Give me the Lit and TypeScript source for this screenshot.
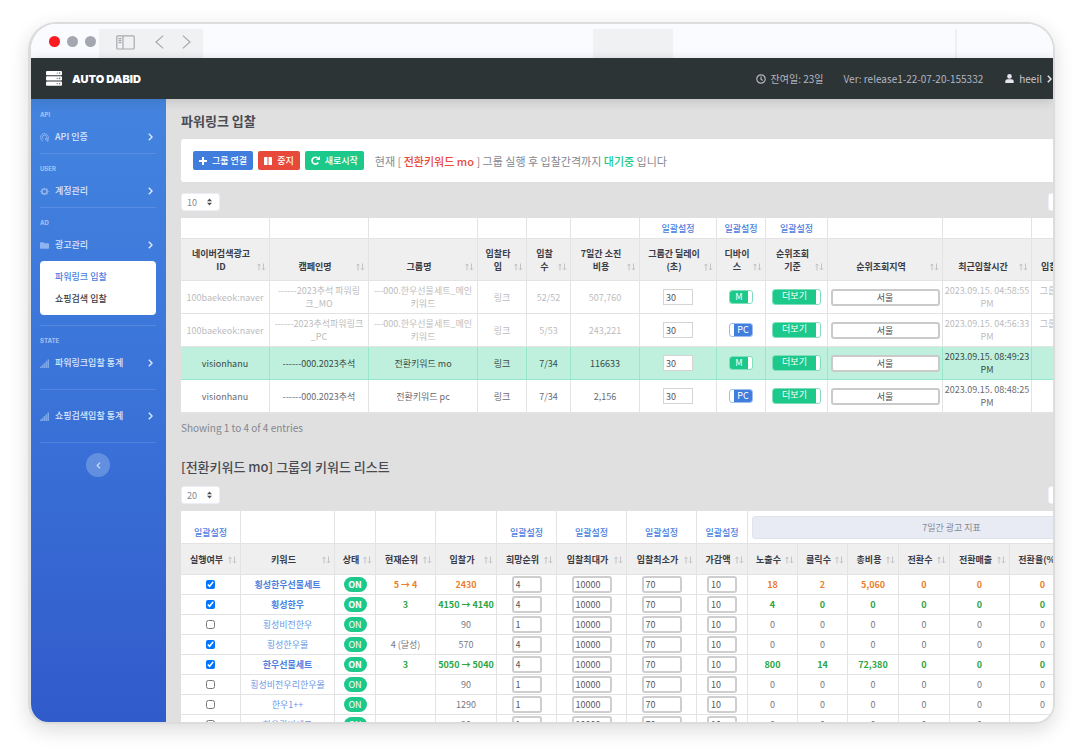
import { LitElement, html, css, svg, nothing } from "lit";
import { customElement, property } from "lit/decorators.js";
import { classMap } from "lit/directives/class-map.js";

interface Column {
  label: string;
  width: number;
  bulk?: boolean;
}

interface GroupRow {
  id: string;
  campaign: string;
  group: string;
  count: string;
  cost: string;
  mobile: boolean;
  time: string;
  state: string;
  tone: "muted" | "active" | "plain";
}

interface KeywordRow {
  on: boolean;
  keyword: string;
  rank: string;
  bid: string;
  target: string;
  stats: string[];
  tone: "up" | "down" | "none";
}

const GROUP_COLUMNS: Column[] = [
  { label: "네이버검색광고\nID", width: 89 },
  { label: "캠페인명", width: 99 },
  { label: "그룹명", width: 109 },
  { label: "입찰타\n입", width: 49 },
  { label: "입찰\n수", width: 44 },
  { label: "7일간 소진\n비용", width: 69 },
  { label: "그룹간 딜레이\n(초)", width: 77, bulk: true },
  { label: "디바이\n스", width: 49, bulk: true },
  { label: "순위조회\n기준", width: 62, bulk: true },
  { label: "순위조회지역", width: 115 },
  { label: "최근입찰시간", width: 89 },
  { label: "입찰상태", width: 60 },
];

const GROUP_ROWS: GroupRow[] = [
  { id: "100baekeok:naver", campaign: "------2023추석 파워링\n크_MO", group: "---000.한우선물세트_메인\n키워드", count: "52/52", cost: "507,760", mobile: true, time: "2023.09.15. 04:58:55\nPM", state: "그룹 실행중\n ", tone: "muted" },
  { id: "100baekeok:naver", campaign: "------2023추석파워링크\n_PC", group: "---000.한우선물세트_메인\n키워드", count: "5/53", cost: "243,221", mobile: false, time: "2023.09.15. 04:56:33\nPM", state: "그룹 실행중\n ", tone: "muted" },
  { id: "visionhanu", campaign: "------000.2023추석", group: "전환키워드 mo", count: "7/34", cost: "116633", mobile: true, time: "2023.09.15. 08:49:23\nPM", state: "", tone: "active" },
  { id: "visionhanu", campaign: "------000.2023추석", group: "전환키워드 pc", count: "7/34", cost: "2,156", mobile: false, time: "2023.09.15. 08:48:25\nPM", state: "", tone: "plain" },
];

const KEYWORD_COLUMNS: Column[] = [
  { label: "실행여부", width: 60, bulk: true },
  { label: "키워드", width: 94 },
  { label: "상태", width: 41 },
  { label: "현재순위", width: 60 },
  { label: "입찰가", width: 61 },
  { label: "희망순위", width: 60, bulk: true },
  { label: "입찰최대가", width: 70, bulk: true },
  { label: "입찰최소가", width: 70, bulk: true },
  { label: "가감액", width: 51, bulk: true },
  { label: "노출수", width: 50 },
  { label: "클릭수", width: 50 },
  { label: "총비용", width: 51 },
  { label: "전환수", width: 51 },
  { label: "전환매출", width: 60 },
  { label: "전환율(%)", width: 66 },
  { label: "", width: 80 },
];

const ZEROS = ["0", "0", "0", "0", "0", "0"];

const KEYWORD_ROWS: KeywordRow[] = [
  { on: true, keyword: "횡성한우선물세트", rank: "5 → 4", bid: "2430", target: "4", stats: ["18", "2", "5,060", "0", "0", "0"], tone: "up" },
  { on: true, keyword: "횡성한우", rank: "3", bid: "4150 → 4140", target: "4", stats: ["4", "0", "0", "0", "0", "0"], tone: "down" },
  { on: false, keyword: "횡성비전한우", rank: "", bid: "90", target: "1", stats: ZEROS, tone: "none" },
  { on: true, keyword: "횡성한우몰", rank: "4 (달성)", bid: "570", target: "4", stats: ZEROS, tone: "none" },
  { on: true, keyword: "한우선물세트", rank: "3", bid: "5050 → 5040", target: "4", stats: ["800", "14", "72,380", "0", "0", "0"], tone: "down" },
  { on: false, keyword: "횡성비전우리한우몰", rank: "", bid: "90", target: "1", stats: ZEROS, tone: "none" },
  { on: false, keyword: "한우1++", rank: "", bid: "1290", target: "1", stats: ZEROS, tone: "none" },
  { on: false, keyword: "한우갈비세트", rank: "", bid: "90", target: "1", stats: ZEROS, tone: "none" },
];

const sortIcon = svg`<path d="M2 7.5V1M.4 2.6 2 1l1.6 1.6M6.5.5V7M4.9 5.4 6.5 7l1.6-1.6" fill="none" stroke="currentColor" stroke-width=".9"/>`;

const base = css`
  * {
    box-sizing: border-box;
  }
  svg {
    display: block;
    flex: none;
  }
  a {
    color: inherit;
    text-decoration: none;
  }
  button,
  input,
  select {
    font: inherit;
    margin: 0;
  }
`;

const grid = css`
  table {
    table-layout: fixed;
    width: 0;
    border-collapse: separate;
    border-spacing: 0;
    background: #fff;
  }
  th,
  td {
    padding: 0;
    border-right: 1px solid #e3e3e3;
    border-bottom: 1px solid #e3e3e3;
    text-align: center;
    vertical-align: middle;
    white-space: pre;
    line-height: 13px;
    font-weight: 400;
  }
  .bulk {
    color: #4a80e0;
    font-weight: 500;
  }
  .head th {
    background: #efefef;
    color: #3a3b45;
    font-weight: 700;
    vertical-align: bottom;
  }
  .title {
    display: flex;
    align-items: flex-end;
    padding: 0 3px 7px 4px;
  }
  .title span {
    flex: 1;
    min-width: 0;
  }
  .title svg {
    width: 9px;
    height: 8px;
    margin-bottom: 2px;
    color: #bdbdc2;
  }
`;

const headCells = (columns: Column[]) =>
  columns.map(
    (c) => html`<th scope="col"><div class="title"><span>${c.label}</span><svg viewBox="0 0 9 8" aria-hidden="true">${sortIcon}</svg></div></th>`
  );

const colGroup = (columns: Column[]) =>
  html`<colgroup>${columns.map((c) => html`<col style="width:${c.width}px" />`)}</colgroup>`;

const bulkCell = (c: Column) =>
  html`<td>${c.bulk ? html`<a class="bulk" href="#">일괄설정</a>` : nothing}</td>`;

@customElement("window-chrome")
class WindowChrome extends LitElement {
  static styles = [
    base,
    css`
      :host {
        display: flex;
        flex: none;
        height: 34px;
        padding-top: 5px;
        background: #f9fbff;
      }
      .dots {
        display: flex;
        align-items: center;
        gap: 7px;
        padding: 0 3px 4px 18px;
      }
      .dot {
        width: 11px;
        height: 11px;
        border-radius: 50%;
        background: #a5a7b0;
      }
      .close {
        background: #fb1a22;
      }
      .tools {
        display: flex;
        align-items: center;
        width: 104px;
        padding: 0 12px 3px 17px;
        background: #f0f1f3;
        color: #a9a9ad;
      }
      .tools svg {
        fill: none;
        stroke: currentColor;
        stroke-width: 1.2;
      }
      .back {
        margin-left: auto;
      }
      .forward {
        margin-left: 18px;
      }
      .tab {
        width: 80px;
        background: #f0f1f3;
      }
      .rule {
        width: 2px;
        background: #eeeff2;
      }
      .gap-a {
        flex: 65;
      }
      .gap-b {
        flex: 47;
      }
      .gap-c {
        flex: 16;
      }
    `,
  ];
  render() {
    return html`
      <div class="dots"><i class="dot close"></i><i class="dot"></i><i class="dot"></i></div>
      <div class="tools">
        <svg width="19" height="15" viewBox="0 0 19 15"><rect x=".8" y=".8" width="17.4" height="13.2" rx="1" /><path d="M7 1v13M2.5 3.6h3M2.5 5.6h3M2.5 7.6h3" /></svg>
        <svg class="back" width="9" height="14" viewBox="0 0 9 14"><path d="M8.2.6 1 7l7.2 6.4" /></svg>
        <svg class="forward" width="9" height="14" viewBox="0 0 9 14"><path d="M.8.6 8 7 .8 13.4" /></svg>
      </div>
      <div class="gap-a"></div>
      <div class="tab"></div>
      <div class="gap-b"></div>
      <div class="rule"></div>
      <div class="gap-c"></div>
    `;
  }
}

@customElement("top-bar")
class TopBar extends LitElement {
  static styles = [
    base,
    css`
      :host {
        display: flex;
        flex: none;
        align-items: center;
        height: 41px;
        padding: 0 1px 0 15px;
        background: #2d3436;
        color: #b3b5c0;
        font-size: 10px;
        white-space: nowrap;
        position: relative;
        box-shadow: 0 2px 10px rgba(58, 59, 69, 0.2);
      }
      .brand {
        display: flex;
        align-items: center;
        gap: 10px;
        margin-right: auto;
        color: #fff;
        font: 900 11px/14px Inter, sans-serif;
      }
      .item {
        display: flex;
        align-items: center;
        gap: 5px;
      }
      .version {
        margin: 0 22px 0 20px;
      }
      .user {
        color: #c6c8d2;
      }
    `,
  ];
  render() {
    return html`
      <a class="brand" href="#">
        <svg width="16" height="15" viewBox="0 0 16 15">
          <g fill="#fff"><rect width="16" height="4.2" rx="1" /><rect y="5.3" width="16" height="4.2" rx="1" /><rect y="10.6" width="16" height="4.2" rx="1" /></g>
          <g fill="#73777b"><circle cx="13.6" cy="2.1" r=".8" /><circle cx="13.6" cy="7.4" r=".8" /><circle cx="13.6" cy="12.7" r=".8" /><circle cx="11.2" cy="2.1" r=".6" /><circle cx="11.2" cy="7.4" r=".6" /><circle cx="11.2" cy="12.7" r=".6" /></g>
        </svg>
        AUTO DABID
      </a>
      <span class="item">
        <svg width="10" height="10" viewBox="0 0 10 10" fill="none" stroke="currentColor" stroke-width="1.2"><circle cx="5" cy="5" r="4.2" /><path d="M5 2.4V5.2l1.7 1.2" /></svg>
        잔여일: 23일
      </span>
      <span class="version">Ver: release1-22-07-20-155332</span>
      <a class="item user" href="#">
        <svg width="9" height="9" viewBox="0 0 9 9" fill="#e4e5ee"><circle cx="4.5" cy="2.4" r="2.3" /><path d="M.3 9V7.4C.3 6 1.3 5.2 2.6 5.2h3.8c1.3 0 2.3.8 2.3 2.2V9z" /></svg>
        heeil
        <svg width="5" height="8" viewBox="0 0 5 8" fill="none" stroke="#e4e5ee" stroke-width="1.5"><path d="M.8.8 4 4 .8 7.2" /></svg>
      </a>
    `;
  }
}

@customElement("side-nav")
class SideNav extends LitElement {
  static styles = [
    base,
    css`
      :host {
        display: flex;
        flex-direction: column;
        flex: none;
        width: 135px;
        padding: 1px 10px 0 9px;
        background: linear-gradient(#4384df, #3a72d8 50%, #315bcb);
        color: #dbe7fb;
        font-size: 9px;
        font-weight: 500;
      }
      .label {
        margin: 10px 0 7px;
        font: 800 6px/10px Inter, sans-serif;
        color: #9dbdf0;
      }
      .item {
        display: flex;
        align-items: center;
        gap: 6px;
        height: 20px;
        line-height: 20px;
        white-space: nowrap;
      }
      .item .icon {
        color: #8fb4ef;
      }
      .item .chev {
        margin: 0 3px 0 auto;
      }
      .line {
        height: 1px;
        margin-top: 6px;
        background: rgba(255, 255, 255, 0.13);
      }
      .roomy,
      .lone {
        margin-top: 16px;
      }
      .after-menu {
        margin-top: 10px;
      }
      .menu {
        display: flex;
        flex-direction: column;
        margin-top: 6px;
        padding: 5px 15px;
        border-radius: 4px;
        background: #fff;
        color: #3a3b45;
        line-height: 22px;
      }
      .current {
        color: #4a80e0;
      }
      .fold {
        display: grid;
        place-items: center;
        align-self: center;
        width: 24px;
        height: 24px;
        margin-top: 10px;
        padding: 0;
        border: 0;
        border-radius: 50%;
        background: #638fe0;
        color: #c9daf7;
      }
    `,
  ];
  private item(icon: unknown, text: string, extra = "") {
    return html`<a class="item ${extra}" href="#">
      <svg class="icon" width="9" height="9" viewBox="0 0 10 10">${icon}</svg>${text}
      <svg class="chev" width="5" height="8" viewBox="0 0 5 8" fill="none" stroke="currentColor" stroke-width="1.4"><path d="M.8.8 4 4 .8 7.2" /></svg>
    </a>`;
  }
  render() {
    const dial = svg`<path d="M3.400 9A4.300 4.300 0 1 1 8.800 7M3.400 6.400A2.300 2.300 0 1 1 7.300 5.200M5.600 6.400h3.200v3z" fill="none" stroke="currentColor" stroke-width="1.1"/>`;
    const gear = svg`<path d="M5 .5 6.300 2l2-.2.2 2L10 5 8.500 6.200l-.2 2-2-.2L5 9.500 3.700 8l-2 .2-.2-2L0 5l1.500-1.200.2-2 2 .2z" fill="currentColor"/><circle cx="5" cy="5" r="2" fill="#4280dd"/>`;
    const folder = svg`<path d="M0 2.200C0 1.600.4 1.400.8 1.400h3l1.200 1.200h4.200c.5 0 .8.3.8.8v4.400c0 .5-.3.8-.8.8H.8c-.5 0-.8-.3-.8-.8z" fill="currentColor"/>`;
    const bars = svg`<path d="M0 10V8.300h1.700V10zM2 10V6.500h1.700V10zM4.100 10V4.500h1.700V10zM6.200 10V2.500h1.700V10zM8.300 10V.5H10V10z" fill="currentColor" opacity=".8"/>`;
    return html`
      <div class="label">API</div>
      ${this.item(dial, "API 인증")}
      <div class="line"></div>
      <div class="label">USER</div>
      ${this.item(gear, "계정관리")}
      <div class="line"></div>
      <div class="label">AD</div>
      ${this.item(folder, "광고관리")}
      <nav class="menu"><a class="current" href="#">파워링크 입찰</a><a href="#">쇼핑검색 입찰</a></nav>
      <div class="line after-menu"></div>
      <div class="label">STATE</div>
      ${this.item(bars, "파워링크입찰 통계")}
      <div class="line roomy"></div>
      ${this.item(bars, "쇼핑검색입찰 통계", "lone")}
      <div class="line roomy"></div>
      <button class="fold" aria-label="메뉴 접기">
        <svg width="5" height="7" viewBox="0 0 5 7" fill="none" stroke="currentColor" stroke-width="1.3"><path d="M4 .6 1.2 3.5 4 6.4" /></svg>
      </button>
    `;
  }
}

@customElement("table-tools")
class TableTools extends LitElement {
  @property() size = "10";
  static styles = [
    base,
    css`
      :host {
        display: flex;
        justify-content: space-between;
        font-size: 9px;
      }
      .pick {
        position: relative;
        color: #4e5057;
      }
      select {
        display: block;
        appearance: none;
        width: 39px;
        height: 18px;
        padding: 0 6px 0 5px;
        border: 1px solid #eceef5;
        border-radius: 3px;
        background: #fff;
        color: #85878f;
      }
      .pick svg {
        position: absolute;
        right: 8px;
        top: 5px;
        pointer-events: none;
      }
      .search {
        width: 120px;
        height: 18px;
        margin-right: -115px;
        border: 1px solid #eceef5;
        border-radius: 3px;
        background: #fff;
      }
    `,
  ];
  render() {
    return html`
      <label class="pick"><select aria-label="표시 개수"><option>${this.size}</option></select>
        <svg width="5" height="8" viewBox="0 0 5 8" fill="currentColor"><path d="M0 3.300 2.500.5 5 3.300zM0 4.700h5L2.500 7.500z" /></svg>
      </label>
      <input class="search" type="search" aria-label="검색" />
    `;
  }
}

@customElement("group-table")
class GroupTable extends LitElement {
  static styles = [
    base,
    grid,
    css`
      .filters {
        height: 21px;
      }
      .head {
        height: 42px;
      }
      .row {
        height: 33px;
        color: #6a6b72;
      }
      .muted {
        color: #bcbcc0;
      }
      .active {
        color: #3c4a46;
      }
      .active td {
        background: #bff0de;
        border-color: #98e6cb;
      }
      .delay {
        width: 30px;
        height: 16px;
        padding: 0 2px;
        border: 1px solid #d4d4d4;
        background: #fff;
        color: #55565c;
        display: block;
        margin: 0 auto;
      }
      .region {
        display: block;
        width: calc(100% - 5px);
        height: 17px;
        margin: 0 auto;
        padding: 0;
        border: 2px solid #cacaca;
        border-radius: 3px;
        background: #fff;
        color: #4a4b52;
        text-align: center;
      }
      .switch {
        display: flex;
        margin: 0 auto;
        padding: 0;
        border: 1px solid #7fdfbd;
        border-radius: 3px;
        background: #fff;
        color: #fff;
        overflow: hidden;
        width: 24px;
        height: 14px;
        line-height: 12px;
      }
      .switch span {
        flex: 1;
        margin-right: 4px;
        background: #1cc88a;
      }
      .pc {
        border-color: #9dbdf0;
      }
      .pc span {
        margin: 0 0 0 4px;
        background: #417ddd;
      }
      .more {
        width: 49px;
        height: 16px;
      }
    `,
  ];
  render() {
    return html`
      <table>
        ${colGroup(GROUP_COLUMNS)}
        <thead>
          <tr class="filters">${GROUP_COLUMNS.map(bulkCell)}</tr>
          <tr class="head">${headCells(GROUP_COLUMNS)}</tr>
        </thead>
        <tbody>
          ${GROUP_ROWS.map(
            (r) => html`<tr class="row ${r.tone}">
              <td>${r.id}</td>
              <td>${r.campaign}</td>
              <td>${r.group}</td>
              <td>링크</td>
              <td>${r.count}</td>
              <td>${r.cost}</td>
              <td><input class="delay" value="30" aria-label="그룹간 딜레이(초)" /></td>
              <td><button class=${classMap({ switch: true, pc: !r.mobile })}><span>${r.mobile ? "M" : "PC"}</span></button></td>
              <td><button class="switch more"><span>더보기</span></button></td>
              <td><input class="region" value="서울" aria-label="순위조회지역" /></td>
              <td>${r.time}</td>
              <td>${r.state}</td>
            </tr>`
          )}
        </tbody>
      </table>
    `;
  }
}

@customElement("keyword-table")
class KeywordTable extends LitElement {
  static styles = [
    base,
    grid,
    css`
      .filters {
        height: 33px;
      }
      .filters td {
        vertical-align: bottom;
        padding-bottom: 4px;
      }
      .filters .wide {
        padding: 0 4px;
        vertical-align: middle;
      }
      .period {
        display: block;
        width: 100%;
        height: 23px;
        border: 1px solid #dfe3ef;
        border-radius: 3px;
        background: #e8ebf4;
        color: #85878f;
      }
      .head {
        height: 31px;
      }
      .head .title {
        padding-bottom: 8px;
      }
      .row {
        height: 20px;
        color: #77787f;
      }
      .row td {
        line-height: 17px;
      }
      .link {
        color: #6c97e6;
      }
      .up td,
      .down td {
        font-weight: 700;
      }
      .up {
        color: #ea7f2b;
      }
      .down {
        color: #2da544;
      }
      .up .link,
      .down .link {
        color: #4a80e0;
      }
      .check {
        display: block;
        width: 9px;
        height: 9px;
        margin: 0 auto;
      }
      .on {
        display: block;
        width: 23px;
        height: 15px;
        margin: 0 auto;
        border-radius: 8px;
        background: #1cc88a;
        color: #fff;
        line-height: 15px;
      }
      .box {
        display: block;
        height: 17px;
        margin: 0 auto;
        padding: 0 2px;
        border: 2px solid #cecece;
        border-radius: 3px;
        background: #fff;
        color: #55565c;
        font-weight: 400;
      }
      .w30 {
        width: 30px;
      }
      .w40 {
        width: 40px;
      }
    `,
  ];
  render() {
    return html`
      <table>
        ${colGroup(KEYWORD_COLUMNS)}
        <thead>
          <tr class="filters">
            ${KEYWORD_COLUMNS.slice(0, 9).map(bulkCell)}
            <td class="wide" colspan="7"><button class="period">7일간 광고 지표</button></td>
          </tr>
          <tr class="head">${headCells(KEYWORD_COLUMNS)}</tr>
        </thead>
        <tbody>
          ${KEYWORD_ROWS.map(
            (r) => html`<tr class="row ${r.tone}">
              <td><input class="check" type="checkbox" .checked=${r.on} aria-label="${r.keyword} 실행여부" /></td>
              <td><a class="link" href="#">${r.keyword}</a></td>
              <td><span class="on">ON</span></td>
              <td>${r.rank}</td>
              <td>${r.bid}</td>
              <td><input class="box w30" value=${r.target} aria-label="희망순위" /></td>
              <td><input class="box w40" value="10000" aria-label="입찰최대가" /></td>
              <td><input class="box w40" value="70" aria-label="입찰최소가" /></td>
              <td><input class="box w30" value="10" aria-label="가감액" /></td>
              ${r.stats.map((s) => html`<td>${s}</td>`)}
              <td></td>
            </tr>`
          )}
        </tbody>
      </table>
    `;
  }
}

@customElement("app-root")
class AppRoot extends LitElement {
  static styles = [
    base,
    css`
      :host {
        display: flex;
        height: 100vh;
        box-sizing: border-box;
        padding: 22px 26px 31px 28px;
        background: #fff;
        font-family: "Noto Sans CJK KR", sans-serif;
        font-size: 9px;
      }
      .frame {
        flex: 1;
        min-width: 0;
        display: flex;
        flex-direction: column;
        overflow: hidden;
        border: 2px solid #dcdcdc;
        border-left-width: 3px;
        border-radius: 28px 28px 20px 20px;
        box-shadow: 0 6px 20px rgba(0, 0, 0, 0.14);
      }
      .body {
        flex: 1;
        min-height: 0;
        display: flex;
      }
      main {
        flex: 1;
        min-width: 0;
        overflow: hidden;
        padding: 12px 0 0 15px;
        background: #e0e0e0;
        color: #4a4b52;
      }
      h1,
      h2 {
        margin: 0;
        font-size: 13px;
        line-height: 20px;
        font-weight: 500;
      }
      h1 {
        font-weight: 700;
      }
      h2 {
        margin: 22px 0 9px;
      }
      .panel {
        display: flex;
        align-items: center;
        gap: 5px;
        height: 43px;
        margin: 8px 0 11px;
        padding: 0 12px;
        background: #fff;
        border-radius: 3px 0 0 3px;
        white-space: nowrap;
      }
      .btn {
        display: flex;
        align-items: center;
        gap: 5px;
        height: 19px;
        padding: 0 6px;
        border: 0;
        border-radius: 2px;
        background: #417ddd;
        color: #fff;
        font-weight: 500;
      }
      .stop {
        background: #e74a3b;
      }
      .restart {
        background: #1cc88a;
      }
      .status {
        margin: 0 0 0 6px;
        font-size: 11px;
        color: #85878f;
      }
      .status b {
        font-weight: 500;
        color: #e74a3b;
      }
      .status .wait {
        color: #1cc88a;
      }
      table-tools {
        margin-bottom: 7px;
      }
      .summary {
        margin: 8px 0 0;
        font-size: 10px;
        line-height: 14px;
        color: #85878f;
      }
      group-table,
      keyword-table {
        display: block;
      }
    `,
  ];
  render() {
    return html`
      <div class="frame">
        <window-chrome></window-chrome>
        <top-bar></top-bar>
        <div class="body">
          <side-nav></side-nav>
          <main>
            <h1>파워링크 입찰</h1>
            <section class="panel">
              <button class="btn">
                <svg width="8" height="8" viewBox="0 0 8 8" stroke="currentColor" stroke-width="2"><path d="M4 0v8M0 4h8" /></svg>그룹 연결
              </button>
              <button class="btn stop">
                <svg width="8" height="8" viewBox="0 0 8 8" fill="currentColor"><rect width="3.5" height="8" rx=".6" /><rect x="4.5" width="3.5" height="8" rx=".6" /></svg>중지
              </button>
              <button class="btn restart">
                <svg width="9" height="9" viewBox="0 0 9 9" fill="none" stroke="currentColor" stroke-width="1.7"><path d="M7.3 6.5A3.400 3.400 0 1 1 6.700 2.100" /><path d="M5 3.900h4V0z" fill="currentColor" stroke="none" /></svg>새로시작
              </button>
              <p class="status">현재 [ <b>전환키워드 mo</b> ] 그룹 실행 후 입찰간격까지 <b class="wait">대기중</b> 입니다</p>
            </section>
            <table-tools size="10"></table-tools>
            <group-table></group-table>
            <p class="summary">Showing 1 to 4 of 4 entries</p>
            <h2>[전환키워드 mo] 그룹의 키워드 리스트</h2>
            <table-tools size="20"></table-tools>
            <keyword-table></keyword-table>
          </main>
        </div>
      </div>
    `;
  }
}
